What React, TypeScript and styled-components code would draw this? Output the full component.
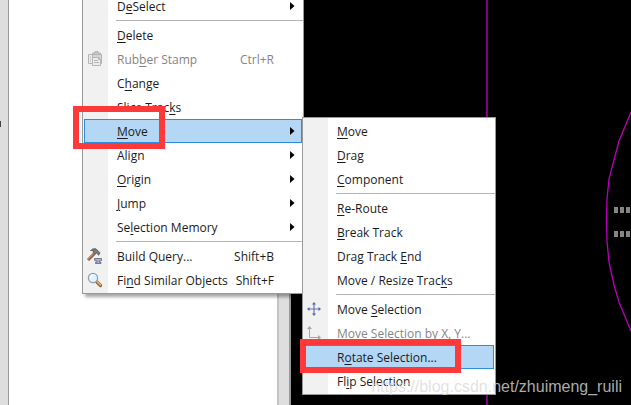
import React from "react";
import styled, { createGlobalStyle, css } from "styled-components";

const GlobalStyle = createGlobalStyle`
  *, *::before, *::after { box-sizing: border-box; }
  body {
    margin: 0;
    font-family: "Open Sans", "Noto Sans", sans-serif;
    font-size: 12px;
    color: #1c1c1c;
  }
`;

const Workspace = styled.main`
  position: relative;
  display: flex;
  height: 100vh;
  overflow: hidden;
  background: #000;
`;

const Ruler = styled.aside`
  flex: 0 0 9px;
  padding-top: 121px;
  background: #dedede;
  border-right: 1px solid #999;
`;

const RulerMark = styled.div`
  width: 1px;
  height: 6px;
  background: #444;
`;

const Sheet = styled.section`
  flex: 0 0 268px;
  background: #fff;
`;

const Splitter = styled.div`
  flex: 0 0 14px;
  background: #dedede;
  border-left: 2px solid #c4c4c4;
  border-right: 2px solid #999;
`;

const Board = styled.section`
  position: relative;
  flex: 1;
  display: flex;
  justify-content: flex-end;
  min-width: 0;
  background: #000;
`;

const BoardDrawing = styled.svg`
  display: block;
  flex: none;
`;

const menuFrame = css`
  position: absolute;
  margin: 0;
  padding: 1px 0;
  list-style: none;
  border: 1px solid #999;
  background: linear-gradient(to right, #f1f1f1 25px, #fff 25px);
`;

const Menu = styled.ul`
  ${menuFrame}
  top: -8px;
  left: 82px;
  width: 222px;
  box-shadow: 3px 3px 3px rgba(0, 0, 0, 0.35);
`;

const SubMenu = styled.ul`
  ${menuFrame}
  top: -2px;
  left: 219px;
  width: 194px;
`;

const Entry = styled.li`
  position: relative;
`;

const EntryButton = styled.button<{ $active?: boolean }>`
  display: grid;
  grid-template-columns: 24px 1fr auto 11px;
  align-items: center;
  width: calc(100% - 2px);
  height: 24px;
  margin: 0 1px;
  padding: 0;
  border: 1px solid ${(p) => (p.$active ? "#2f8ddd" : "transparent")};
  background: ${(p) => (p.$active ? "#b3d7f5" : "transparent")};
  color: inherit;
  font: inherit;
  line-height: 18px;
  text-align: left;
  white-space: nowrap;
  font-variant-ligatures: none;

  &:disabled { color: #858585; }
`;

const IconCell = styled.span`
  display: flex;
  align-items: center;
  height: 18px;
  padding-left: 2px;
`;

const Label = styled.span`
  padding: 1px 0 0 8px;
  u { text-underline-offset: 2px; }
`;

const Shortcut = styled.span`
  padding: 1px 16px 0 0;
`;

const Divider = styled.li`
  height: 5px;
  margin-left: 33px;
  padding-top: 2px;

  &::before {
    content: "";
    display: block;
    height: 1px;
    background: #b4b4b4;
  }
`;

const Highlight = styled.div<{ $x: number; $y: number; $w: number; $h: number }>`
  position: absolute;
  left: ${(p) => p.$x}px;
  top: ${(p) => p.$y}px;
  width: ${(p) => p.$w}px;
  height: ${(p) => p.$h}px;
  border: 6px solid #ff3939;
  pointer-events: none;
`;

const Watermark = styled.div`
  position: absolute;
  right: 9px;
  bottom: 8px;
  font: 16px/20px "Liberation Sans", Arial, sans-serif;
  color: rgba(218, 218, 218, 0.8);
  pointer-events: none;
`;

const ArrowIcon = () => (
  <svg width="5" height="8" viewBox="0 0 5 8" aria-hidden="true">
    <path d="M0 0 L4.5 4 L0 8 Z" fill="#000" />
  </svg>
);

const StampIcon = () => (
  <svg width="16" height="16" viewBox="0 0 16 16" fill="#ededed" stroke="#b4b4b4" aria-hidden="true">
    <path d="M1.5 3.5h8v9h-8z" />
    <path d="M5.5 3.5V2h2l.5-1.5h3l.5 1.5h2v1.5" fill="#c6c6c6" />
    <path d="M5.5 3.5h9v9h-9z" fill="#d4d4d4" />
    <path d="M5.5 6.5h6l2 2v6h-8z" />
    <path d="M3 6h1M3 8h1M3 10h1M7 9.500h4M7 11.500h5M11.5 6.5v2h2" fill="none" />
  </svg>
);

const HammerIcon = () => (
  <svg width="16" height="16" viewBox="0 0 16 16" aria-hidden="true">
    <path d="M7.5 5.5 1 12" stroke="#925b39" strokeWidth="3" />
    <path d="M7 5.5 1 11.3" stroke="#d9a37c" strokeWidth="1" />
    <path d="M3.5 2.5 6 .8h3l4 4-1.2 2.5L9.4 5 8 6.4 6 4.2 7 3z" fill="#777b7d" stroke="#4d5052" strokeWidth=".7" />
    <path d="M7.5 10.5h7v2l-2 .5v1.2h1.5v1.3H8.5v-1.3H10V13l-2.5-.7z" fill="#abb0c5" stroke="#60647d" strokeWidth=".8" />
  </svg>
);

const SearchIcon = () => (
  <svg width="16" height="16" viewBox="0 0 16 16" aria-hidden="true">
    <path d="m9.5 9.5 4 4" stroke="#8a5b36" strokeWidth="3.2" strokeLinecap="round" />
    <path d="m10 9.5 3.5 3.5" stroke="#eeb267" strokeWidth="1.7" strokeLinecap="round" />
    <circle cx="6" cy="6" r="4.6" fill="#dff2ff" stroke="#929eac" strokeWidth="1.3" />
    <path d="M3.4 6.2A2.8 2.8 0 0 1 6.2 3.3" fill="none" stroke="#fff" strokeWidth="1.4" />
  </svg>
);

const MoveIcon = () => (
  <svg width="14" height="14" viewBox="0 0 14 14" aria-hidden="true">
    <path d="M7 1.5v11M1.5 7h11" stroke="#6974a9" strokeWidth="1.2" />
    <path d="M7 0 9 2.5H5zM7 14l2-2.5H5zM0 7l2.5-2v4zM14 7l-2.5-2v4z" fill="#59659b" />
  </svg>
);

const AxesIcon = () => (
  <svg width="14" height="14" viewBox="0 0 14 14" aria-hidden="true">
    <path d="M2.5 2v9.5H12" fill="none" stroke="#a6a6a6" />
    <path d="M2.5 0 5 3H0zM14 11.5 11 9v5z" fill="#a6a6a6" />
  </svg>
);

type Item = {
  label: string;
  hotkey: number;
  shortcut?: string;
  icon?: React.ReactNode;
  disabled?: boolean;
  active?: boolean;
  submenu?: Node[];
  arrow?: boolean;
};
type Node = Item | "divider";

const moveItems: Node[] = [
  { label: "Move", hotkey: 0 },
  { label: "Drag", hotkey: 0 },
  { label: "Component", hotkey: 0 },
  "divider",
  { label: "Re-Route", hotkey: 0 },
  { label: "Break Track", hotkey: 0 },
  { label: "Drag Track End", hotkey: 11 },
  { label: "Move / Resize Tracks", hotkey: 18 },
  "divider",
  { label: "Move Selection", hotkey: 5, icon: <MoveIcon /> },
  { label: "Move Selection by X, Y...", hotkey: -1, icon: <AxesIcon />, disabled: true },
  { label: "Rotate Selection...", hotkey: 1, active: true },
  { label: "Flip Selection", hotkey: 2 },
];

const editItems: Node[] = [
  { label: "DeSelect", hotkey: 1, arrow: true },
  "divider",
  { label: "Delete", hotkey: 0 },
  { label: "Rubber Stamp", hotkey: 3, shortcut: "Ctrl+R", icon: <StampIcon />, disabled: true },
  { label: "Change", hotkey: 1 },
  { label: "Slice Tracks", hotkey: 10 },
  { label: "Move", hotkey: 0, arrow: true, active: true, submenu: moveItems },
  { label: "Align", hotkey: 3, arrow: true },
  { label: "Origin", hotkey: 0, arrow: true },
  { label: "Jump", hotkey: 0, arrow: true },
  { label: "Selection Memory", hotkey: 2, arrow: true },
  "divider",
  { label: "Build Query...", hotkey: -1, shortcut: "Shift+B", icon: <HammerIcon /> },
  { label: "Find Similar Objects", hotkey: 2, shortcut: "Shift+F", icon: <SearchIcon /> },
];

const Mnemonic = ({ text, at }: { text: string; at: number }) =>
  at < 0 ? (
    <>{text}</>
  ) : (
    <>
      {text.slice(0, at)}
      <u>{text[at]}</u>
      {text.slice(at + 1)}
    </>
  );

const MenuEntries = ({ items }: { items: Node[] }) => (
  <>
    {items.map((item, i) =>
      item === "divider" ? (
        <Divider key={i} role="separator" />
      ) : (
        <Entry key={i} role="none">
          <EntryButton
            type="button"
            role="menuitem"
            $active={item.active}
            disabled={item.disabled}
            aria-haspopup={item.arrow ? "menu" : undefined}
            aria-expanded={item.submenu ? true : undefined}
          >
            <IconCell>{item.icon}</IconCell>
            <Label>
              <Mnemonic text={item.label} at={item.hotkey} />
            </Label>
            <Shortcut>{item.shortcut}</Shortcut>
            {item.arrow ? <ArrowIcon /> : <span />}
          </EntryButton>
          {item.submenu && (
            <SubMenu role="menu" aria-label={item.label}>
              <MenuEntries items={item.submenu} />
            </SubMenu>
          )}
        </Entry>
      )
    )}
  </>
);

const pads = [323, 329, 335];

export default function App() {
  return (
    <>
      <GlobalStyle />
      <Workspace>
        <Ruler>
          <RulerMark />
        </Ruler>
        <Sheet />
        <Splitter />
        <Board aria-label="Circuit board">
          <BoardDrawing width="340" height="405" viewBox="0 0 340 405" aria-hidden="true">
            <path d="M196 0V405" stroke="#800080" strokeWidth="2" />
            <path
              d="M340 112 328 141 324 156 318 179 316 199 315.500 221 316 241 318 262 323 285 328 302 340 331"
              fill="none"
              stroke="#b800b8"
              strokeWidth="1.3"
            />
            {pads.map((x) => (
              <path key={x} d={`M${x} 207h4v6h-4zM${x} 231h4v6h-4z`} fill="#858585" />
            ))}
          </BoardDrawing>
        </Board>
        <Menu role="menu" aria-label="Edit">
          <MenuEntries items={editItems} />
        </Menu>
        <Highlight $x={73} $y={106} $w={92} $h={43} />
        <Highlight $x={300} $y={339} $w={161} $h={34} />
        <Watermark>https://blog.csdn.net/zhuimeng_ruili</Watermark>
      </Workspace>
    </>
  );
}
